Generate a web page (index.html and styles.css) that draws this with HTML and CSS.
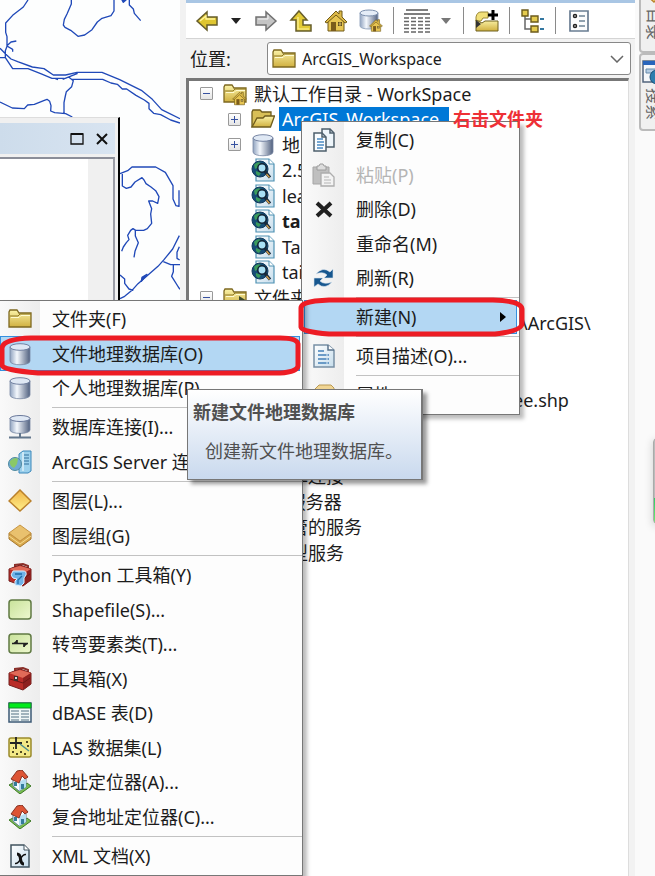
FILE: index.html
```html
<!DOCTYPE html>
<html lang="zh-CN">
<head>
<meta charset="utf-8">
<meta name="viewport" content="width=device-width, initial-scale=1">
<title>ArcGIS_Workspace</title>
<link rel="stylesheet" href="styles.css">
</head>
<body>
<svg class="sprite" aria-hidden="true">
  <defs>
    <linearGradient id="gold" x1="0" y1="0" x2="0" y2="1"><stop offset="0" stop-color="#fbf3a8"/><stop offset="1" stop-color="#d0b040"/></linearGradient>
    <linearGradient id="steel" x1="0" y1="0" x2="1" y2="0"><stop offset="0" stop-color="#8fa2bf"/><stop offset=".35" stop-color="#f4f8fd"/><stop offset="1" stop-color="#50607f"/></linearGradient>
    <linearGradient id="lime" x1="0" y1="0" x2="1" y2="1"><stop offset="0" stop-color="#c8e29a"/><stop offset="1" stop-color="#eef8cf"/></linearGradient>
    <linearGradient id="amber" x1="0" y1="0" x2="0" y2="1"><stop offset="0" stop-color="#f0b448"/><stop offset="1" stop-color="#fff08a"/></linearGradient>
    <linearGradient id="paper" x1="0" y1="0" x2="1" y2="1"><stop offset="0" stop-color="#ffffff"/><stop offset="1" stop-color="#c6ddec"/></linearGradient>
    <symbol id="i-folder" viewBox="0 0 24 24"><path d="M1 20V5l1-2h7l2 3h12v14z" fill="url(#gold)" stroke="#7d6820" stroke-width="1.3"/><path d="M2 9h8l2-2h11" fill="none" stroke="#8d7623"/><path d="M3 10.5h8l2-2h9" fill="none" stroke="#fffbd0"/></symbol>
    <symbol id="i-open" viewBox="0 0 24 24"><path d="M1 20V5l1-2h7l2 2h9v5" fill="#d8bf57" stroke="#6f5c1c" stroke-width="1.3"/><path d="M1 20 6 11h6l2-2h9.500l-4 11z" fill="url(#gold)" stroke="#6f5c1c" stroke-width="1.3"/></symbol>
    <symbol id="i-house" viewBox="0 0 24 24"><path d="M4 12v10h16V12L12 4z" fill="#e7c552" stroke="#705a18"/><path d="M1 13 12 2l3 3V2h3v6l5 5-2 1-9-8-9 8z" fill="#dcb948" stroke="#705a18"/><path d="M7 13h5v9H7z" fill="#7b5c1b"/><path d="M14 13h4v4h-4z" fill="#5a471a"/><path d="M14.500 15h3M16 13v4" stroke="#f3dc86" stroke-width=".7"/></symbol>
    <symbol id="i-homefolder" viewBox="0 0 24 24"><use href="#i-folder"/><use href="#i-house" x="9" y="9" width="15" height="15"/></symbol>
    <symbol id="i-linkfolder" viewBox="0 0 24 24"><use href="#i-folder"/><path d="M16 10v10l8-5z" fill="#3d4b2c"/></symbol>
    <symbol id="i-db" viewBox="0 0 24 24"><path d="M2 5v14c0 5 20 5 20 0V5z" fill="url(#steel)" stroke="#7988a3" stroke-width=".8"/><ellipse cx="12" cy="5" rx="10" ry="3.300" fill="#dfe8f4" stroke="#69789a" stroke-width=".9"/></symbol>
    <symbol id="i-dblink" viewBox="0 0 24 24"><path d="M2 3v12c0 4.500 20 4.500 20 0V3z" fill="url(#steel)" stroke="#7988a3" stroke-width=".8"/><ellipse cx="12" cy="3.500" rx="10" ry="3" fill="#dfe8f4" stroke="#69789a"/><path d="M12 18v4M1 22.500h22" stroke="#62768c" stroke-width="2"/></symbol>
    <symbol id="i-dbhome" viewBox="0 0 24 24"><path d="M1 4v13c0 4 18 4 18 0V4z" fill="url(#steel)" stroke="#9aabc2"/><ellipse cx="10" cy="4" rx="9" ry="3" fill="#e5edf7" stroke="#7c90ad"/><use href="#i-house" x="10" y="9" width="14" height="15"/></symbol>
    <symbol id="i-map" viewBox="0 0 24 24"><path d="M5 1h13l5 5v17H5z" fill="url(#paper)" stroke="#4f92b3" stroke-width="1.200"/><path d="M18 1v5h5" fill="#fff" stroke="#4f92b3"/><circle cx="9" cy="11" r="8" fill="#164d76" stroke="#113a5c"/><path d="M3 7q3-4 7-2l-2 4-4 2zM5 13l5 2-2 3q-4-1-3-5z" fill="#3b9b5c"/><circle cx="11" cy="10" r="4.200" fill="#a9e0f4" stroke="#123" stroke-width="1.500"/><path d="m14 13.500 5 6" stroke="#182a3c" stroke-width="3"/><path d="m15.500 16 3 3.500" stroke="#dca24a" stroke-width="1.200"/></symbol>
    <symbol id="i-copy" viewBox="0 0 24 24"><path d="M10 1h8l4 4v14H10z" fill="#eef5fa" stroke="#4d5f6c" stroke-width="1.500"/><path d="M18 1v4h4" fill="none" stroke="#4d5f6c" stroke-width="1.500"/><path d="M2 5h8l4 4v14H2z" fill="#fafdff" stroke="#4d5f6c" stroke-width="1.500"/><path d="M10 5v4h4" fill="none" stroke="#4d5f6c" stroke-width="1.500"/><path d="M5 11h6M5 14h7M5 17h7M5 20h6" stroke="#4b8ac4" stroke-width="1.300"/></symbol>
    <symbol id="i-paste" viewBox="0 0 24 24"><path d="M1 4h16v17H1z" fill="#bfbfbf" stroke="#a5a5a5"/><path d="M5 3h2l1-2h3l1 2h2v4H5z" fill="#ddd" stroke="#9c9c9c"/><path d="M9 10h9l4 4v9H9z" fill="#f3f3f3" stroke="#adadad" stroke-width="1.300"/><path d="M12 14h5M12 17h7M12 20h7" stroke="#b5b5b5"/></symbol>
    <symbol id="i-delete" viewBox="0 0 24 24"><path d="m5 6 14 13M19 6 5 19" stroke="#202020" stroke-width="4"/></symbol>
    <symbol id="i-refresh" viewBox="0 0 24 24"><path d="M4 8q7-8 14-2l3-3v9h-9l3-3q-4-4-11-1zM20 16q-7 8-14 2l-4 3v-9h9l-3 3q4 4 12 1z" fill="#17578f" stroke="#d8e4ef" stroke-width=".6"/></symbol>
    <symbol id="i-doc" viewBox="0 0 24 24"><path d="M2 1h14l6 5v17H2z" fill="url(#paper)" stroke="#7890a5" stroke-width="1.500"/><path d="M16 1v5h6" fill="#fff" stroke="#58728a" stroke-width="1.500"/><path d="M6 7h6M6 11h11M6 15h11M6 19h11" stroke="#4480b8" stroke-width="1.400"/><path d="M15 9v12" stroke="#dbe8f2"/></symbol>
    <symbol id="i-prop" viewBox="0 0 24 24"><path d="M3 6 7 2h12l3 3v16H3z" fill="#f0d594" stroke="#b99952"/></symbol>
    <symbol id="i-server" viewBox="0 0 24 24"><path d="M11 4l4-3h8v20l-3 2h-9z" fill="#9bd0ec" stroke="#3a87ba"/><path d="M15 2v19" stroke="#fff"/><path d="M16 5h5M16 8h5M16 11h5M16 14h5" stroke="#336f9b"/><circle cx="7" cy="14" r="6.500" fill="#70a9d3" stroke="#4f8a9f"/><path d="M2 11q5-5 8-2l-1 5-3 4q-5-2-4-7z" fill="#8ac867"/></symbol>
    <symbol id="i-layer" viewBox="0 0 24 24"><path d="M12 1 23 12 12 22 1 12z" fill="url(#amber)" stroke="#ba812c" stroke-width="1.500"/></symbol>
    <symbol id="i-layers" viewBox="0 0 24 24"><path d="M1 9v6l11 8 11-8V9L12 17z" fill="#d9a94d" stroke="#a8792f"/><path d="m1 12 11 8 11-8" fill="none" stroke="#f6dc91"/><path d="M12 1 23 9 12 17 1 9z" fill="#e9c16e" stroke="#c89542"/></symbol>
    <symbol id="i-toolbox" viewBox="0 0 24 24"><path d="M7 5V2l8-1 5 2v4" fill="none" stroke="#8a3029" stroke-width="2"/><path d="M1 6 12 2l11 4v11l-8 6L1 18z" fill="#b92d28" stroke="#73201e"/><path d="M1 6 12 3l11 3-8 5z" fill="#e06b59"/><path d="m15 11 8-5v11l-8 6z" fill="#8d211f"/><path d="m2 12 13 4 7-5" fill="none" stroke="#6c1716"/><path d="M6 9h4v5H6z" fill="#40302d"/><path d="M7 10h2v2H7z" fill="#ddd"/></symbol>
    <symbol id="i-python" viewBox="0 0 24 24"><use href="#i-toolbox"/><path d="M5 8h10q4 0 3 4l-2 3v5l-3 3-6-1v-4l2-2q-5 0-6-4z" fill="#6fb3e8" stroke="#e0f2ff"/><path d="M7 11h7M14 13l-4 4v4" fill="none" stroke="#1e6eaa" stroke-width="1.300"/></symbol>
    <symbol id="i-shape" viewBox="0 0 24 24"><rect x="1" y="2" width="22" height="19" rx="3" fill="url(#lime)" stroke="#607a43" stroke-width="1.500"/></symbol>
    <symbol id="i-turn" viewBox="0 0 24 24"><use href="#i-shape"/><path d="M4 11.500h16M9 8v3.500M16 11.500V15" stroke="#222" stroke-width="1.700"/><path d="M9 8v3.500H5zM16 11.500V15l4-3.500z" fill="#222"/></symbol>
    <symbol id="i-table" viewBox="0 0 24 24"><path d="M1 2h22v19H1z" fill="#f0f6f7" stroke="#3d5a75" stroke-width="1.500"/><path d="M1 2h22v5H1z" fill="#00eb1b" stroke="#158b2b"/><path d="M3 10h8M3 13h8M3 16h8M3 19h8M13 10h8M13 13h8M13 16h8M13 19h8" stroke="#527083"/></symbol>
    <symbol id="i-las" viewBox="0 0 24 24"><rect x="1" y="2" width="22" height="19" rx="2" fill="#f3e987" stroke="#9a8a2c" stroke-width="1.500"/><path d="M8 1v12M2 7h12" stroke="#222" stroke-width="1.800"/><path d="m12 8 9 7" stroke="#4d8f8d" stroke-width="1.500"/><path d="M4 16h2M8 18h2M12 16h2M16 18h2M18 6h2M19 10h2M5 12h1" stroke="#514a22" stroke-width="2"/></symbol>
    <symbol id="i-address" viewBox="0 0 24 24"><path d="m1 15 4-2 7 6 7-6 4 3-11 8z" fill="#79bd50" stroke="#3e7828"/><path d="M5 9v7l6 5 7-4V9l-5-4z" fill="#f6fbff" stroke="#678093"/><path d="m11 12 7-4v9l-7 4z" fill="#b5ddf1"/><path d="M3 9 9 1l5-1 6 7-3 2-3-3-3 7z" fill="#dd5435" stroke="#863223"/><path d="M13 14h3v5h-3z" fill="#357b9b"/><path d="M6 12h3v4H6z" fill="#347c9a"/></symbol>
    <symbol id="i-xml" viewBox="0 0 24 24"><path d="M3 1h13l5 5v17H3z" fill="url(#paper)" stroke="#40535f" stroke-width="1.500"/><path d="M16 1v5h5" fill="#fff" stroke="#40535f"/><path d="M9 10q3 0 3.500 5t3.500 5" fill="none" stroke="#111" stroke-width="3"/><path d="M18 10.500q-3-.5-5.500 4.500T7 19.500" fill="none" stroke="#111" stroke-width="1.500"/></symbol>
    <symbol id="i-back" viewBox="0 0 24 24"><path d="M2 12 12 3v5h10v8H12v5z" fill="#dfc631" stroke="#665d2b" stroke-width="1.500"/><path d="M5 12l6-5v3h9" fill="none" stroke="#fff59c" stroke-width="1.300"/></symbol>
    <symbol id="i-forward" viewBox="0 0 24 24"><path d="M22 12 12 3v5H2v8h10v5z" fill="#c5c5c5" stroke="#717171" stroke-width="1.500"/><path d="M4 10h10V6" fill="none" stroke="#f4f4f4"/></symbol>
    <symbol id="i-up" viewBox="0 0 24 24"><path d="M10 2 18 11h-4v5h8v6H7V11H2z" fill="#e2ca36" stroke="#665d2b" stroke-width="1.500"/><path d="M9 8v12h11" fill="none" stroke="#fff59c" stroke-width="1.200"/></symbol>
    <symbol id="i-grid" viewBox="0 0 28 24"><path d="M3 1h22M1 5h26" stroke="#555" stroke-width="1.500"/><path d="M1 9h26M1 12.500h26M1 16h26M1 19.500h26M1 23h26" stroke="#666" stroke-width="1.500" stroke-dasharray="5 2"/></symbol>
    <symbol id="i-caret" viewBox="0 0 12 8"><path d="M1 1h10L6 7z" fill="currentColor"/></symbol>
    <symbol id="i-connect" viewBox="0 0 24 24"><path d="M1 8q1-5 5-5h7v6H8l-2 3H1z" fill="#f1df79" stroke="#9b8939"/><path d="M1 22V11l6 3 3-2h13v10z" fill="url(#gold)" stroke="#6f601f"/><path d="M1 11v8l5-4z" fill="#333"/><path d="M18 1v10M13 6h10" stroke="#000" stroke-width="3"/></symbol>
    <symbol id="i-tree" viewBox="0 0 24 24"><path d="M4 7v13h7M4 10h7" fill="none" stroke="#666" stroke-width="1.500"/><path d="M1 1h6v6H1zM10 7h7v6h-7zM10 17h7v6h-7z" fill="#e5cb4e" stroke="#6c5b1c" stroke-width="1.400"/><path d="M19 10h4M19 20h4" stroke="#3477a1" stroke-width="2"/></symbol>
    <symbol id="i-options" viewBox="0 0 24 24"><path d="M3 2h18v20H3z" fill="#fbfcfd" stroke="#6a7d92" stroke-width="1.700"/><circle cx="8" cy="7" r="1.500" fill="none" stroke="#222" stroke-width="1.500"/><circle cx="8" cy="17" r="1.500" fill="none" stroke="#222" stroke-width="1.500"/><path d="M12 7h6M12 12h6M12 17h6" stroke="#6d8395" stroke-width="1.600"/></symbol>
    <symbol id="i-search" viewBox="0 0 24 24"><path d="M1 1h22v21H1z" fill="#f5f7fa" stroke="#51647c" stroke-width="1.500"/><path d="M1 1h22v4H1z" fill="#2864bb"/><path d="M4 9h18v4H4z" fill="#b4cce3" stroke="#668bac"/><circle cx="15" cy="17" r="7" fill="#2e7eae" stroke="#194e77"/></symbol>
  </defs>
</svg>

<div class="workspace">
  <main class="map">
    <svg class="map-lines" viewBox="0 0 540 900" aria-label="地图">
      <g fill="none" stroke="#2049b8" stroke-width="4" stroke-linejoin="round">
        <path d="M84 0 70 21 38 46 17 69v28l4 13v29l-5 13v22M0 145l20 20 13 12 20 8 44 16 35 5 28 19h37l34-8h75l53 22 65 32 33 27 28 31 55 27M0 173h16l22 33h46l38 15 34 14h37M20 138l13-12 16-3M21 138l17 10v7M166 236l8 3M188 238l15-6 30-12M215 238h93l25 11 19 4 15 14h13l28 19 25 14 14 10v16l14 14 21 4 30 16 28 9M205 230l15 12-5 18-16 15-3 13-4 20v32M0 306l37 18 36 2 10-11 20-2 30-12 8-3 8 6 4 13-1 16 12 5 33 3 20 10M214 0v12l-13 30-8 16-3 17 5 7 17 9 22 18 20-4 22-16 16-23 14-11 27-8 9-14V0M388 0v15l12 12 3 13 19 22"/>
        <path d="M366 0h12l-8 7z" fill="#2049b8"/>
        <path d="M360 521l23-9 13-11h71l29 16 23 40v40l9 20 9 2v-48M367 518v40l12 7 14-4 12-15 21-13 6 7 6 11 15 10 14 11 10 18-4 20-15-7h-12l9 23-3 16 3 28-13 16-11 5h-24l-8-5-7 5-9 15 4 13-8 9-9 13-5 13M406 691v17l9 20-10 26-3 18M360 896l14-7 22-18 18-20 60-52 18-20 26-32 20-40M360 825l14 12v13l13 17 13 4M538 740l-7 17v18l8 5M490 785l22 9h28M520 795v20l-5 14 20 32 5 7"/>
        <path d="m426 832 15-9-17 21z" fill="#2049b8"/>
      </g>
    </svg>
    <section class="float-window">
      <header class="float-title">
        <button type="button" aria-label="最大化"><svg viewBox="0 0 14 14"><path d="M1 2h12v10H1z" fill="none" stroke="#111" stroke-width="1.300"/><path d="M1 2h12" stroke="#111" stroke-width="2"/></svg></button>
        <button type="button" aria-label="关闭"><svg viewBox="0 0 14 14"><path d="m2 2 10 10M12 2 2 12" stroke="#111" stroke-width="2"/></svg></button>
      </header>
      <div class="float-body"><div class="float-scroll"></div></div>
    </section>
  </main>

  <section class="catalog">
    <div class="toolbar">
      <button type="button" aria-label="后退"><svg><use href="#i-back"/></svg></button>
      <button type="button" class="drop" aria-label="后退列表"><svg><use href="#i-caret"/></svg></button>
      <button type="button" aria-label="前进"><svg><use href="#i-forward"/></svg></button>
      <button type="button" aria-label="向上"><svg><use href="#i-up"/></svg></button>
      <button type="button" aria-label="主目录"><svg><use href="#i-house"/></svg></button>
      <button type="button" aria-label="默认地理数据库"><svg><use href="#i-dbhome"/></svg></button>
      <span class="divider"></span>
      <button type="button" aria-label="视图"><svg class="wide"><use href="#i-grid"/></svg></button>
      <button type="button" class="drop drop--soft" aria-label="视图列表"><svg><use href="#i-caret"/></svg></button>
      <span class="divider"></span>
      <button type="button" aria-label="连接文件夹"><svg><use href="#i-connect"/></svg></button>
      <span class="divider"></span>
      <button type="button" aria-label="目录树"><svg><use href="#i-tree"/></svg></button>
      <span class="divider"></span>
      <button type="button" aria-label="选项"><svg><use href="#i-options"/></svg></button>
    </div>
    <div class="location">
      <label for="location">位置:</label>
      <div class="combo">
        <svg class="icon"><use href="#i-folder"/></svg>
        <select id="location"><option>ArcGIS_Workspace</option></select>
        <svg class="chevron" viewBox="0 0 14 8"><path d="m1 1 6 6 6-6" fill="none" stroke="#666" stroke-width="1.500"/></svg>
      </div>
    </div>
    <ul class="tree">
      <li class="row"><button type="button" class="toggle" aria-label="折叠"></button><svg class="icon"><use href="#i-homefolder"/></svg><span class="label">默认工作目录 - WorkSpace</span></li>
      <li class="row child"><button type="button" class="toggle plus" aria-label="展开"></button><svg class="icon"><use href="#i-open"/></svg><span class="label selected">ArcGIS_Workspace</span></li>
      <li class="row child"><button type="button" class="toggle plus" aria-label="展开"></button><svg class="icon"><use href="#i-db"/></svg><span class="label">地</span></li>
      <li class="row child leaf"><svg class="icon"><use href="#i-map"/></svg><span class="label">2.5</span></li>
      <li class="row child leaf"><svg class="icon"><use href="#i-map"/></svg><span class="label">lea</span></li>
      <li class="row child leaf"><svg class="icon"><use href="#i-map"/></svg><span class="label strong">ta</span></li>
      <li class="row child leaf"><svg class="icon"><use href="#i-map"/></svg><span class="label">Ta</span></li>
      <li class="row child leaf"><svg class="icon"><use href="#i-map"/></svg><span class="label">tai</span></li>
      <li class="row"><button type="button" class="toggle" aria-label="折叠"></button><svg class="icon"><use href="#i-linkfolder"/></svg><span class="label">文件夹</span></li>
      <li class="row path">\ArcGIS\</li>
      <li class="row path file">ee.shp</li>
      <li class="row leaf databases"><span class="icon"></span><span class="label">数据库连接</span></li>
      <li class="row leaf servers"><span class="icon"></span><span class="label">GIS 服务器</span></li>
      <li class="row leaf hosted"><span class="icon"></span><span class="label">我托管的服务</span></li>
      <li class="row leaf ready"><span class="icon"></span><span class="label">即用型服务</span></li>
    </ul>
  </section>

  <aside class="rail">
    <button type="button" class="tab tab--first"><svg class="icon"><use href="#i-layer"/></svg><span>目录</span></button>
    <button type="button" class="tab"><svg class="icon"><use href="#i-search"/></svg><span>搜索</span></button>
    <div class="meter"></div>
  </aside>

  <div class="menu context" role="menu">
    <div class="group">
      <button type="button" role="menuitem"><svg class="icon"><use href="#i-copy"/></svg>复制(C)</button>
      <button type="button" role="menuitem" disabled><svg class="icon"><use href="#i-paste"/></svg>粘贴(P)</button>
      <button type="button" role="menuitem"><svg class="icon"><use href="#i-delete"/></svg>删除(D)</button>
      <button type="button" role="menuitem"><span class="icon"></span>重命名(M)</button>
      <button type="button" role="menuitem"><svg class="icon"><use href="#i-refresh"/></svg>刷新(R)</button>
    </div>
    <div class="group">
      <button type="button" role="menuitem" class="active" aria-haspopup="true"><span class="icon"></span>新建(N)<svg class="arrow" viewBox="0 0 8 12"><path d="M1 1v10l6-5z"/></svg></button>
    </div>
    <div class="group">
      <button type="button" role="menuitem"><svg class="icon"><use href="#i-doc"/></svg>项目描述(O)...</button>
    </div>
    <div class="group">
      <button type="button" role="menuitem"><svg class="icon"><use href="#i-prop"/></svg>属性(I)...</button>
    </div>
  </div>

  <div class="menu submenu" role="menu">
    <div class="group">
      <button type="button" role="menuitem"><svg class="icon"><use href="#i-folder"/></svg>文件夹(F)</button>
      <button type="button" role="menuitem" class="active"><svg class="icon"><use href="#i-db"/></svg>文件地理数据库(O)</button>
      <button type="button" role="menuitem"><svg class="icon"><use href="#i-db"/></svg>个人地理数据库(P)</button>
    </div>
    <div class="group">
      <button type="button" role="menuitem"><svg class="icon"><use href="#i-dblink"/></svg>数据库连接(I)...</button>
      <button type="button" role="menuitem"><svg class="icon"><use href="#i-server"/></svg>ArcGIS Server 连接</button>
    </div>
    <div class="group">
      <button type="button" role="menuitem"><svg class="icon"><use href="#i-layer"/></svg>图层(L)...</button>
      <button type="button" role="menuitem"><svg class="icon"><use href="#i-layers"/></svg>图层组(G)</button>
    </div>
    <div class="group">
      <button type="button" role="menuitem"><svg class="icon"><use href="#i-python"/></svg>Python 工具箱(Y)</button>
      <button type="button" role="menuitem"><svg class="icon"><use href="#i-shape"/></svg>Shapefile(S)...</button>
      <button type="button" role="menuitem"><svg class="icon"><use href="#i-turn"/></svg>转弯要素类(T)...</button>
      <button type="button" role="menuitem"><svg class="icon"><use href="#i-toolbox"/></svg>工具箱(X)</button>
      <button type="button" role="menuitem"><svg class="icon"><use href="#i-table"/></svg>dBASE 表(D)</button>
      <button type="button" role="menuitem"><svg class="icon"><use href="#i-las"/></svg>LAS 数据集(L)</button>
      <button type="button" role="menuitem"><svg class="icon"><use href="#i-address"/></svg>地址定位器(A)...</button>
      <button type="button" role="menuitem"><svg class="icon"><use href="#i-address"/></svg>复合地址定位器(C)...</button>
    </div>
    <div class="group">
      <button type="button" role="menuitem"><svg class="icon"><use href="#i-xml"/></svg>XML 文档(X)</button>
    </div>
  </div>

  <svg class="ring ring--new" viewBox="0 0 228 42" aria-hidden="true"><path d="M18 4 32 3H196Q224 4 225 12V27Q224 34 198 37H32Q5 35 4 30V11Q4 6 18 4z"/></svg>
  <svg class="ring ring--gdb" viewBox="0 0 302 42" aria-hidden="true"><path d="M31 3H280Q297 3 298 9V31Q297 37 280 38H38Q2 35 2 30V13Q3 4 31 3z"/></svg>
  <div class="note">右击文件夹</div>

  <div class="tooltip" role="tooltip">
    <strong>新建文件地理数据库</strong>
    <p>创建新文件地理数据库。</p>
  </div>
</div>
</body>
</html>
```
FILE: styles.css
```css
* {
  box-sizing: border-box;
}

body {
  margin: 0;
  overflow: hidden;
  background: #fff;
  color: #1c1c1c;
  font: 18px/24px "Noto Sans", "Noto Sans CJK SC", sans-serif;
}

button,
select {
  margin: 0;
  padding: 0;
  border: 0;
  background: none;
  color: inherit;
  font: inherit;
}

.sprite {
  position: absolute;
  width: 0;
  height: 0;
}

.icon {
  flex: none;
  width: 24px;
  height: 24px;
}

.workspace {
  position: relative;
  display: grid;
  grid-template-columns: 180px 1fr 20px;
  min-height: 100vh;
  overflow: hidden;
}

/* Map view and floating window */
.map {
  position: relative;
  background: #fdfefe;
}

.map-lines {
  display: block;
  width: 180px;
  height: 300px;
}

.float-window {
  position: absolute;
  top: 117px;
  left: 0;
  display: flex;
  flex-direction: column;
  width: 120px;
  height: 184px;
  padding-top: 5px;
  padding-right: 3px;
  border-top: 1px solid #ddd;
  border-right: 2px solid #000;
  background: #f0f0f0;
}

.float-title {
  display: flex;
  flex: none;
  justify-content: flex-end;
  align-items: center;
  gap: 11px;
  height: 31px;
  padding-right: 6px;
  background: linear-gradient(90deg, #cddceb, #d8e4f1);
}

.float-title button,
.float-title svg {
  display: block;
  width: 14px;
  height: 14px;
}

.float-body {
  display: flex;
  flex: 1;
  justify-content: flex-end;
  margin-top: 3px;
  border-top: 2px solid #8b8e99;
  border-right: 2px solid #9a9ca5;
  background: #fff;
}

.float-scroll {
  width: 25px;
  background: #f0f0f0;
}

/* Catalog panel */
.catalog {
  display: flex;
  flex-direction: column;
  padding-left: 6px;
  background: #f2f2f2;
}

.toolbar {
  display: flex;
  align-items: center;
  height: 39px;
  padding-left: 3px;
  border-top: 3px solid #a9c6e4;
  border-bottom: 1px solid #d4d4d4;
  background: #fff;
}

.toolbar button {
  display: grid;
  flex: none;
  place-items: center;
  width: 35px;
  height: 30px;
}

.toolbar svg {
  width: 24px;
  height: 24px;
}

.toolbar .wide {
  width: 28px;
}

.toolbar .drop {
  width: 24px;
  color: #222;
}

.toolbar .drop--soft {
  color: #777;
}

.toolbar .drop svg {
  width: 12px;
  height: 8px;
}

.divider {
  flex: none;
  width: 1px;
  height: 27px;
  margin: 0 5px;
  background: #8a8a8a;
}

.location {
  display: flex;
  align-items: center;
  height: 39px;
  padding: 0 4px;
}

.location label {
  width: 77px;
}

.combo {
  display: flex;
  flex: 1;
  align-items: center;
  height: 33px;
  padding: 0 6px 0 4px;
  border: 1px solid #888;
  border-radius: 3px;
  background: #fff;
}

.combo select {
  flex: 1;
  height: 30px;
  padding-left: 6px;
  appearance: none;
  font-size: 16px;
}

.chevron {
  width: 14px;
  height: 8px;
}

.tree {
  display: grid;
  flex: 1;
  grid-auto-rows: 25px 26px;
  align-content: start;
  margin: 0 6px 0 0;
  padding: 0;
  border-top: 3px solid #777;
  border-left: 3px solid #777;
  border-right: 1px solid #ddd;
  background: #fff;
  list-style: none;
}

.row {
  display: flex;
  align-items: center;
  padding-left: 11px;
  white-space: nowrap;
}

.row.child {
  padding-left: 39px;
}

.row.leaf {
  padding-left: 34px;
}

.row.child.leaf {
  padding-left: 62px;
}

.row.path {
  padding-left: 332px;
}

.row.file {
  grid-row: 13;
  padding-left: 324px;
}

.row.databases {
  grid-row: 16;
}

.row.servers {
  grid-row: 17;
}

.row.hosted {
  grid-row: 18;
}

.row.ready {
  grid-row: 19;
}

.toggle {
  position: relative;
  flex: none;
  width: 13px;
  height: 13px;
  margin-right: 10px;
  border: 1px solid #999;
  border-radius: 1px;
  background: linear-gradient(#fff, #e4e4e4);
}

.toggle::before,
.toggle.plus::after {
  content: "";
  position: absolute;
  top: 5px;
  left: 2px;
  width: 7px;
  height: 1px;
  background: #3651a0;
}

.toggle.plus::after {
  transform: rotate(90deg);
}

.label {
  margin-left: 4px;
  padding: 0 3px;
}

.selected {
  padding-right: 10px;
  background: #0078d7;
  color: #fff;
}

.strong {
  font-weight: 700;
}

/* Docked tabs */
.rail {
  padding-left: 4px;
  overflow: hidden;
  background: #fafafa;
}

.tab {
  display: flex;
  flex-direction: column;
  align-items: center;
  gap: 4px;
  width: 30px;
  height: 78px;
  padding-top: 5px;
  border: 2px solid #bbb;
  border-radius: 4px;
  background: #f0f0f0;
  color: #666;
  font-size: 16px;
}

.tab--first {
  margin-top: -25px;
  padding-top: 3px;
}

.tab span {
  writing-mode: vertical-rl;
  text-orientation: sideways;
}

.meter {
  width: 8px;
  height: 86px;
  margin-top: 307px;
  margin-left: 14px;
  border: 1px solid #aaa;
  border-radius: 4px;
  background: linear-gradient(#bbb 70%, #2fce67 70%, #70ed70);
  box-shadow: 0 2px 8px #ccc;
}

/* Popup menus */
.menu {
  position: absolute;
  padding: 1px 2px 2px;
  border: 1px solid #777;
  background: linear-gradient(90deg, #fafafa, #ededed) 0 0 / 42px 100% no-repeat #fdfdfd;
  box-shadow: 4px 4px 4px #0004;
}

.context {
  top: 121px;
  left: 301px;
  width: 219px;
}

.submenu {
  top: 300px;
  left: -3px;
  width: 306px;
}

.group + .group::before {
  content: "";
  display: block;
  height: 1px;
  margin: 2px -2px 2px 52px;
  background: #c2c2c2;
}

.menu button {
  display: flex;
  align-items: center;
  gap: 20px;
  width: 100%;
  height: 34px;
  padding-left: 8px;
  text-align: left;
  white-space: nowrap;
}

.menu button:nth-child(even) {
  height: 35px;
}

.menu button:disabled {
  color: #b5b5b5;
}

.menu .active {
  background: #b3d7f3;
  box-shadow: inset 0 0 0 1px #3490df;
}

.menu .arrow {
  width: 8px;
  height: 12px;
  margin-left: auto;
  margin-right: 10px;
}

/* Tooltip and markup */
.tooltip {
  position: absolute;
  top: 389px;
  left: 187px;
  height: 91px;
  width: 236px;
  padding: 10px 5px;
  border: 1px solid #777;
  border-right-width: 2px;
  background: linear-gradient(#fff, #c9d9ee);
  box-shadow: 4px 4px 4px #0006;
  color: #505050;
}

.tooltip strong {
  display: block;
}

.tooltip p {
  margin: 15px 0 0 12px;
}

.ring {
  position: absolute;
  height: 42px;
  fill: none;
  stroke: #ed1c24;
  stroke-width: 5px;
}

.ring--new {
  top: 297px;
  left: 297px;
  width: 228px;
}

.ring--gdb {
  top: 335px;
  left: 0;
  width: 302px;
}

.note {
  position: absolute;
  top: 107px;
  left: 453px;
  color: #ee3036;
  font-weight: 700;
}
```
